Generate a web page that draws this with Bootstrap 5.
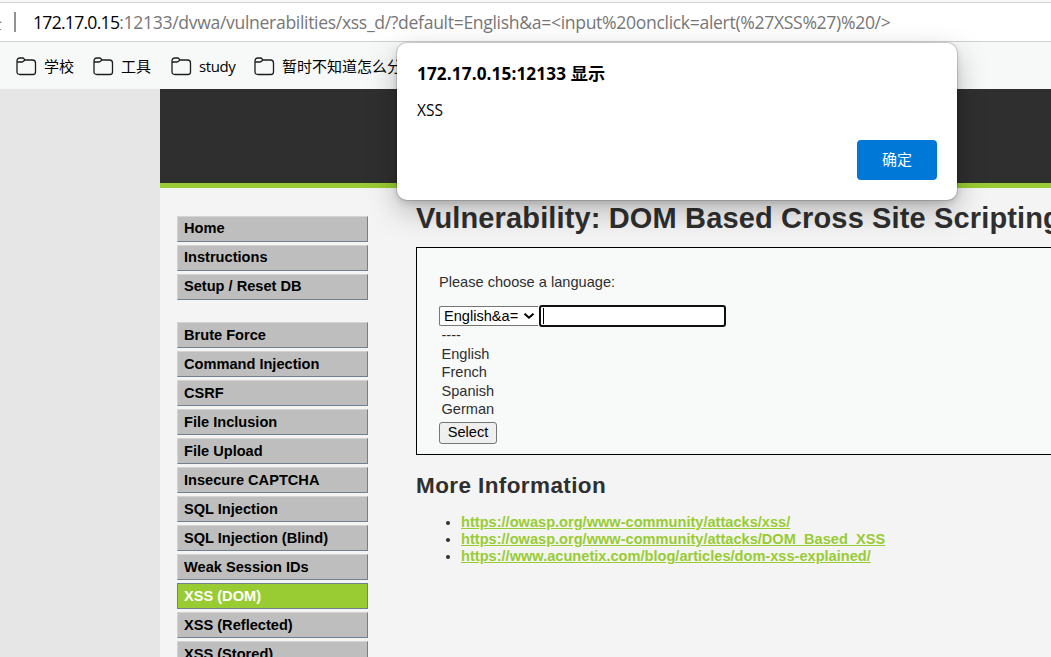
<!DOCTYPE html>
<html lang="zh-CN">
<head>
<meta charset="utf-8">
<meta name="viewport" content="width=device-width, initial-scale=1">
<title>Vulnerability: DOM Based Cross Site Scripting (XSS)</title>
<link href="https://cdn.jsdelivr.net/npm/bootstrap@5.3.0/dist/css/bootstrap.min.css" rel="stylesheet">
<style>
body{height:657px;background:#e6e6e6;font-family:"Liberation Sans",Arial,sans-serif;font-size:14.6px;line-height:17px;color:#2f2f2f}
.browser-ui{font-family:"Open Sans","Noto Sans CJK SC",sans-serif;color:#000}
.address{height:42px;background:#fff;border-bottom:1px solid #cfcfcf;box-shadow:inset 0 2px #f7f9f9,inset 0 3px #d2d2d2;font-size:17.6px;line-height:24px;color:#777;padding-top:10px}
.security{width:2px;height:21px;overflow:hidden;font-size:15px;margin-top:1px;color:#777}
.divider{width:2px;height:20px;background:#919191;margin:2px 17px 0 12px}
.url{letter-spacing:-.33px}
.url b{font-weight:400;color:#000;letter-spacing:-.74px}
.bookmarks{height:47px;background:#f7f9f8;font-size:15px;padding-left:16px}
.bookmark{height:49px}
.bookmark svg{margin-right:7px}
.latin{letter-spacing:-.4px}
.site{margin-left:160px;background:#f4f4f4;height:568px}
.site-head{height:99px;background:#2f2f2f;border-bottom:5px solid #9c3}
.side{width:191px;margin:28px 48px 0 17px}
.side-menu{gap:3px;margin-bottom:22px}
.side-menu a{height:26px;background:#bebebe;border:1px solid;border-color:#d3d3d3 #708090 #708090 #d3d3d3;color:#000;font-weight:700;text-decoration:none;padding:3px 0 0 6px}
.side-menu.attacks a{padding-top:4px}
.side-menu a.current{background:#9c3;color:#fff;border-color:#708090}
h1{font-size:29px;line-height:34px;font-weight:700;margin:13px 0 12px;letter-spacing:.14px}
h2{font-size:22.5px;line-height:26px;font-weight:700;margin:18px 0 15px;letter-spacing:.4px}
.panel{width:720px;height:208px;border:1px solid #000;background:#f8faf9;padding:26px 22px 0}
.panel p{margin:0 0 14px}
.picker{width:99px;height:20px;border:1px solid #767676;border-right:0;border-radius:2px 0 0 2px;background:#fff;color:#000;padding:0 3px 0 4px;white-space:nowrap}
.field{width:187px;height:22px;border:2px solid #101010;border-radius:3px;background:#fff;padding:1px 0 0 2px;margin-left:1px}
.caret{width:1px;height:16px;background:#000}
.options{margin:-1px 0 3px 2.5px;line-height:18.6px}
.pick{width:58px;height:22px;padding:0;border:1px solid #767676;border-radius:3px;background:#efefef;color:#000;line-height:19px;font-size:14.6px}
.links{padding-left:45px;margin:0}
.links a{color:#9c3;font-weight:700}
.dialog-box{position:absolute;left:397px;top:43px;width:560px;height:157px;background:#fff;border-radius:10px;box-shadow:0 0 0 1px rgba(0,0,0,.12),0 11px 30px rgba(0,0,0,.26),0 3px 7px rgba(0,0,0,.14);padding:19px 20px}
.dialog-title{font-size:17.2px;line-height:24px;font-weight:700;letter-spacing:.1px}
.dialog-text{font-size:15.5px;line-height:20px;margin-top:14px}
.confirm{width:80px;height:40px;border:0;border-radius:4px;background:#0078d7;color:#fff;font-size:15px;line-height:20px;padding:0 0 2px;margin-top:20px}
</style>
</head>
<body class="overflow-hidden position-relative">
<header class="browser-ui">
  <div class="address d-flex align-items-start text-nowrap">
    <div class="security d-flex justify-content-end"><span>全</span></div><div class="divider"></div>
    <div class="url"><b>172.17.0.15</b>:12133/dvwa/vulnerabilities/xss_d/?default=English&amp;a=&lt;input%20onclick=alert(%27XSS%27)%20/&gt;</div>
  </div>
  <svg class="d-none"><symbol id="folder" viewBox="0 0 21 19"><path d="M1 6V4q0-3 3-3h2.500q1 0 1.600.8L9 3h7.500q3 0 3 3v9q0 2.500-2.500 2.500H4q-3 0-3-2.500V5h5q1 0 1.500-.8L9 3" fill="none" stroke="#1c1c1c" stroke-width="1.3"/></symbol></svg>
  <nav class="bookmarks d-flex text-nowrap">
    <div class="bookmark d-flex align-items-center" style="width:77px"><svg width="21" height="19"><use href="#folder"/></svg>学校</div>
    <div class="bookmark d-flex align-items-center" style="width:78px"><svg width="21" height="19"><use href="#folder"/></svg>工具</div>
    <div class="bookmark d-flex align-items-center latin" style="width:83px"><svg width="21" height="19"><use href="#folder"/></svg>study</div>
    <div class="bookmark d-flex align-items-center"><svg width="21" height="19"><use href="#folder"/></svg>暂时不知道怎么分</div>
  </nav>
</header>
<main class="site overflow-hidden">
  <div class="site-head"></div>
  <div class="d-flex align-items-start">
    <nav class="side flex-shrink-0">
      <div class="side-menu d-flex flex-column"><a href="#">Home</a><a href="#">Instructions</a><a href="#">Setup / Reset DB</a></div>
      <div class="side-menu attacks d-flex flex-column"><a href="#">Brute Force</a><a href="#">Command Injection</a><a href="#">CSRF</a><a href="#">File Inclusion</a><a href="#">File Upload</a><a href="#">Insecure CAPTCHA</a><a href="#">SQL Injection</a><a href="#">SQL Injection (Blind)</a><a href="#">Weak Session IDs</a><a href="#" class="current">XSS (DOM)</a><a href="#">XSS (Reflected)</a><a href="#">XSS (Stored)</a></div>
    </nav>
    <section class="flex-shrink-0">
      <h1 class="text-nowrap">Vulnerability: DOM Based Cross Site Scripting</h1>
      <div class="panel">
        <p>Please choose a language:</p>
        <div class="d-flex align-items-center">
          <div class="picker d-flex align-items-center justify-content-between"><span>English&amp;a=</span><svg width="12" height="8" viewBox="0 0 12 8"><path d="m1.500 1.700 4.500 4 4.500-4" fill="none" stroke="#000" stroke-width="2"/></svg></div>
          <div class="field"><div class="caret"></div></div>
        </div>
        <div class="options"><div>----</div><div>English</div><div>French</div><div>Spanish</div><div>German</div></div>
        <button class="pick d-block" type="button">Select</button>
      </div>
      <h2>More Information</h2>
      <ul class="links">
        <li><a href="#">https://owasp.org/www-community/attacks/xss/</a></li>
        <li><a href="#">https://owasp.org/www-community/attacks/DOM_Based_XSS</a></li>
        <li><a href="#">https://www.acunetix.com/blog/articles/dom-xss-explained/</a></li>
      </ul>
    </section>
  </div>
</main>
<div class="dialog-box browser-ui" role="dialog">
  <div class="dialog-title">172.17.0.15:12133 显示</div>
  <div class="dialog-text">XSS</div>
  <div class="d-flex justify-content-end"><button class="confirm" type="button">确定</button></div>
</div>
<script src="https://cdn.jsdelivr.net/npm/bootstrap@5.3.0/dist/js/bootstrap.bundle.min.js"></script>
</body>
</html>
